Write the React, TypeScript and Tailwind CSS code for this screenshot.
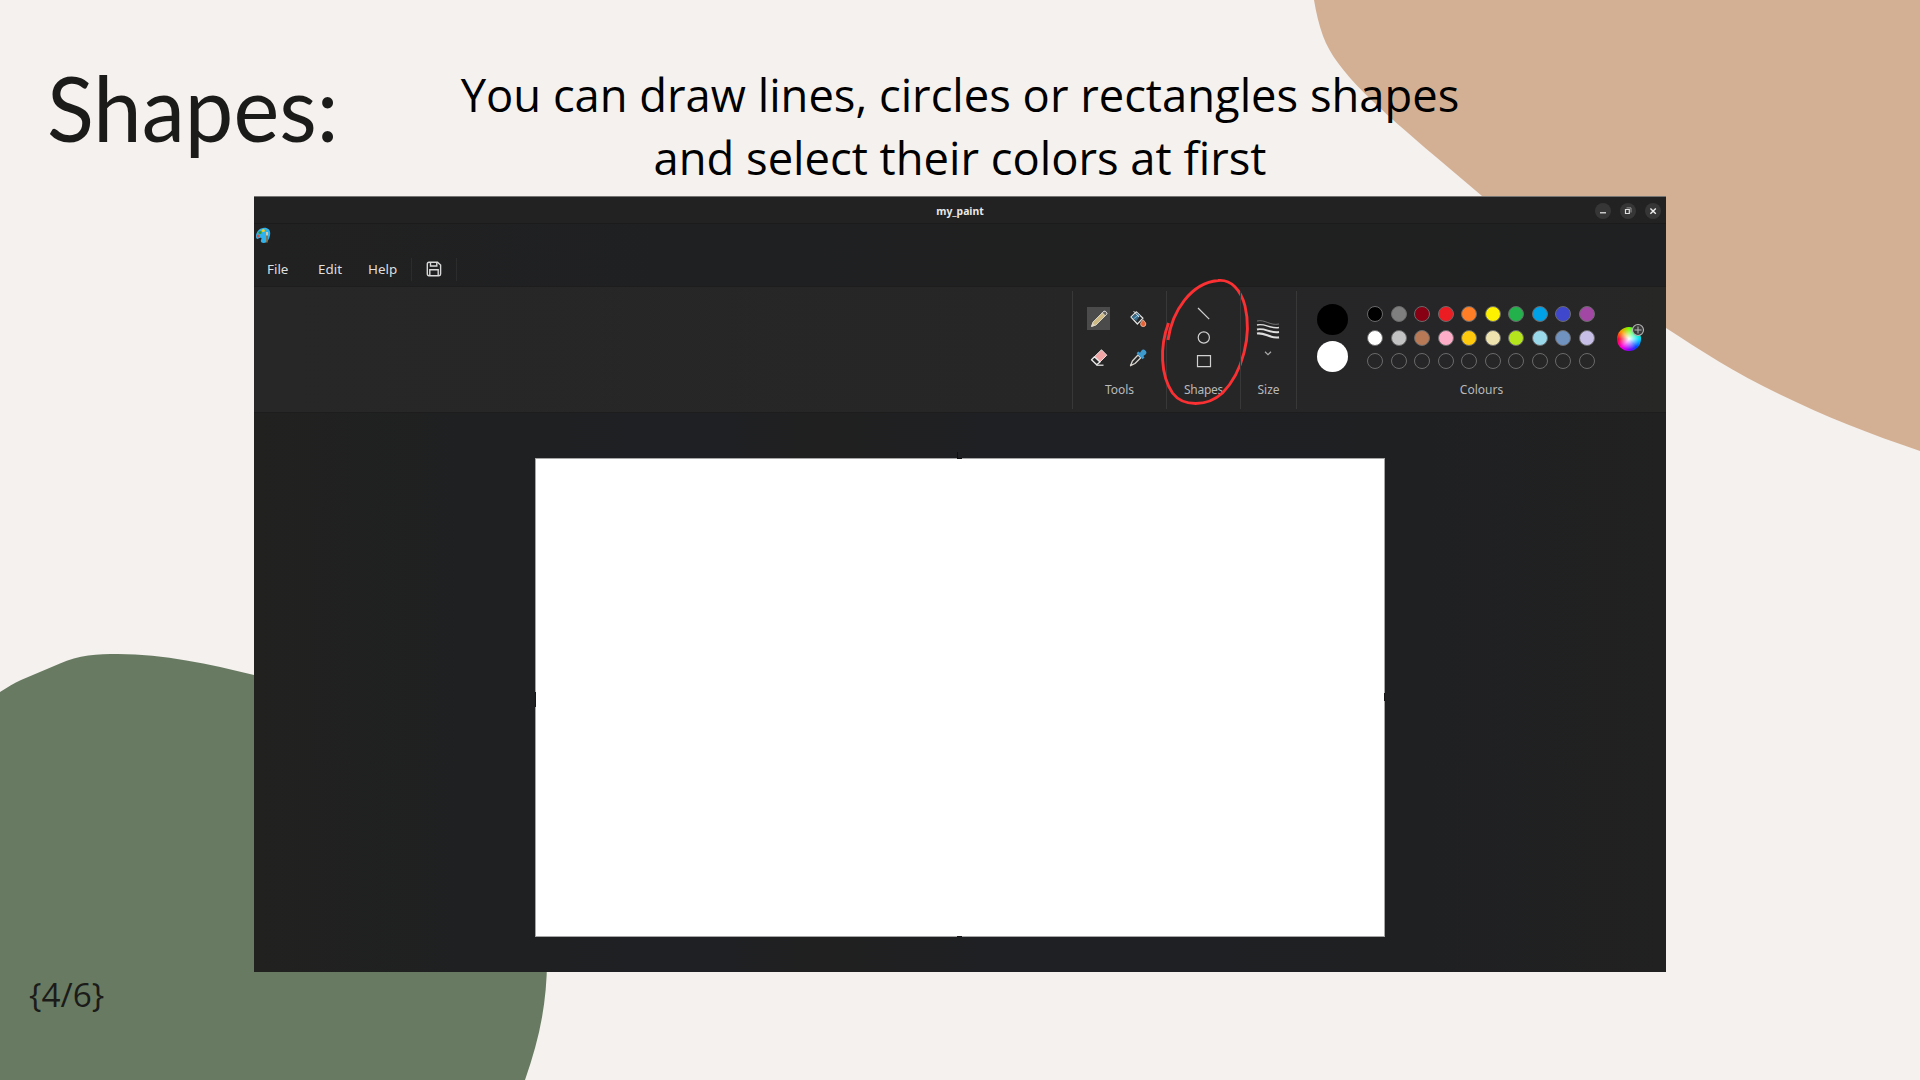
import type { ReactNode } from "react";

const SWATCHES: (string | null)[] = [
  "#000000", "#7f7f7f", "#870014", "#ec1c23", "#ff7e26", "#fef100", "#22b14b", "#00a1e7", "#3f47cc", "#a248a4",
  "#ffffff", "#c3c3c3", "#b87957", "#feadc8", "#ffc90d", "#eee3af", "#b5e51d", "#99d9ea", "#7092bf", "#c7bfe6",
  null, null, null, null, null, null, null, null, null, null,
];

function Backdrop() {
  return (
    <svg className="absolute inset-0" width="1920" height="1080" viewBox="0 0 1920 1080">
      <path
        fill="#d3b094"
        d="M1314 0C1316 12 1319 25 1323 36C1336 72 1380 109 1436 157L1482 196L1666 328C1700 350 1735 373 1779 394C1826 417 1870 434 1920 451V0Z"
      />
      <path
        fill="#687b62"
        d="M0 692C8 687 14 683 21 680L60 663.5C78 655 98 654 118 654C164 654 209 664 254 675L500 760L547 960C547 1004 539 1040 525 1080H0Z"
      />
    </svg>
  );
}

function PaletteLogo() {
  return (
    <svg width="16" height="17" viewBox="0 0 16 17">
      <path fill="#2fb3ee" d="M9 .8C13 .6 15.300 3 15.200 6.500C15.200 9 14 13 11.500 15.200C9 16.600 5.600 16 5.800 13.800C6 12 7.500 11 5.500 10.800C4 10.800 3.200 12.300 1.800 11.800C-.4 10 1.500 1.500 9 .8Z" />
      <circle cx="3.2" cy="9" r="1.6" fill="#d8503c" />
      <circle cx="5" cy="5.600" r="1.6" fill="#2f9a35" />
      <circle cx="8.300" cy="3.5" r="1.6" fill="#f4cb1c" />
      <path d="M12 6V15.5" stroke="#9b6224" strokeWidth="1.5" />
      <path d="M12 5V8.5" stroke="#d8c6a4" strokeWidth="2" />
    </svg>
  );
}

function SaveIcon() {
  return (
    <svg width="16" height="16" viewBox="0 0 16 16" fill="none" stroke="#d8d8d8" strokeWidth="1.4">
      <path d="M3 1.2H11.5L14.6 4V13Q14.6 14.7 13 14.7H3Q1.3 14.7 1.3 13V3Q1.3 1.2 3 1.2Z" />
      <path d="M4.5 1.5V5H10.8V1.5M3.8 14.5V8.8H12.2V14.5" />
    </svg>
  );
}

function PencilIcon() {
  return (
    <svg width="18" height="18" viewBox="0 0 18 18">
      <path d="M1.5 16.5L3 12L13 2Q14.5.8 16 2T16 5L6 15Z" fill="#cdb983" stroke="#d9d3c4" strokeWidth="1" />
      <path d="M12.2 2.8L14 1.2Q15.4 1 16.4 2.2T16.4 4.6L15.2 5.8Z" fill="#66615a" stroke="#dedede" strokeWidth=".9" />
      <path d="M1.2 16.8L2.6 12.8L5.2 15.4Z" fill="#ddd5c2" />
    </svg>
  );
}

function BucketIcon() {
  return (
    <svg width="18" height="18" viewBox="0 0 18 18">
      <path d="M2 7L7.2 1.8L14 8.2L8.4 14Z" fill="#27282a" stroke="#e2e2e2" strokeWidth="1.2" strokeLinejoin="round" />
      <path d="M2.6 7L8 2.7L11.2 5.8L7.3 11Z" fill="#386a87" />
      <path d="M4.4 9L10 4.7" stroke="#74b8df" strokeWidth="1" />
      <path d="M4.5 1L10 7" stroke="#dadada" strokeWidth="1" />
      <path d="M14.2 9.8C15.2 11.3 16.8 12.5 16.8 14A2.6 2.6 0 0 1 11.6 14C11.6 12.5 13.2 11.3 14.2 9.8Z" fill="#e36238" stroke="#f3c5a8" strokeWidth=".8" />
    </svg>
  );
}

function EraserIcon() {
  return (
    <svg width="18" height="18" viewBox="0 0 18 18">
      <path d="M4.600 7.500L11.5 .8L16.800 6.200L10 13Z" fill="#f1a5a5" stroke="#e7dddd" strokeWidth="1" strokeLinejoin="round" />
      <path d="M4.5 7.8L1.5 10.7L6.7 15.8L10 13Z" fill="#29292a" stroke="#ececec" strokeWidth="1.3" strokeLinejoin="round" />
      <path d="M6.5 16.2H13.5" stroke="#ececec" strokeWidth="1.2" />
    </svg>
  );
}

function DropperIcon() {
  return (
    <svg width="18" height="18" viewBox="0 0 18 18">
      <path d="M9 6L11.8 8.8L6 14.5L1.5 16.7L3.4 12Z" fill="#28292a" stroke="#d8d3cd" strokeWidth="1.3" strokeLinejoin="round" />
      <path d="M7.6 4.300L9.2 2.6L11 3.7L12.3 1.7A2.6 2.6 0 0 1 16.5 5.6L14.4 7L15.5 8.5L13.6 10.300Z" fill="#3d9bd0" />
    </svg>
  );
}

function Group({ label, className, children }: { label: string; className: string; children: ReactNode }) {
  return (
    <section className={`relative flex h-[118px] flex-col border-l border-[#383839] ${className}`}>
      <div className="h-[91px]">{children}</div>
      <div className="text-center text-[12px] leading-[16px] text-[#b9b9b9]">{label}</div>
    </section>
  );
}

function TitleBar() {
  return (
    <header className="grid h-[27px] grid-cols-[1fr_auto_1fr] items-center border-b border-[#1b1b1b] bg-[#222222]">
      <span />
      <span className="pt-[3px] text-[10.4px] leading-none font-bold text-[#e9e9e9]">my_paint</span>
      <div className="flex justify-end gap-[9px] pt-px pr-[5px]">
        <svg width="16" height="16" viewBox="0 0 16 16">
          <circle cx="8" cy="8" r="8" fill="#363636" />
          <path d="M5 9.8H11" stroke="#eeeeee" strokeWidth="1.2" />
        </svg>
        <svg width="16" height="16" viewBox="0 0 16 16" fill="none" stroke="#dedede">
          <circle cx="8" cy="8" r="8" fill="#363636" stroke="none" />
          <path d="M5.5 6.5H9.3V10.5H5.5Z" strokeWidth="1.2" />
          <path d="M6.5 4.9H11V9.5" stroke="#969696" />
        </svg>
        <svg width="16" height="16" viewBox="0 0 16 16">
          <circle cx="8" cy="8" r="8" fill="#363636" />
          <path d="M5.4 5.4L10.8 10.8M10.8 5.4L5.4 10.8" stroke="#eeeeee" strokeWidth="1.4" />
        </svg>
      </div>
    </header>
  );
}

function MenuBar() {
  return (
    <nav className="h-[62px] bg-[linear-gradient(90deg,#212121,#1f2022_30%,#202020_65%,#1f2021)]">
      <div className="h-[29px] pt-[3px] pl-[0.5px]"><PaletteLogo /></div>
      <div className="flex h-[32px] items-center text-[13.4px] text-[#dfdfdf]">
        <span className="ml-[13px] w-[51px]">File</span>
        <span className="w-[50px]">Edit</span>
        <span className="w-[43px]">Help</span>
        <span className="h-[23px] w-px bg-[#2c2c2c]" />
        <span className="mr-[14px] ml-[14px]"><SaveIcon /></span>
        <span className="h-[23px] w-px bg-[#2c2c2c]" />
      </div>
    </nav>
  );
}

function Ribbon() {
  return (
    <div className="flex h-[127px] justify-end border-y border-[#1d1d1e] bg-[linear-gradient(90deg,#272727,#262627_60%,#262628_85%,#272726)] pt-[4px]">
      <Group label="Tools" className="w-[94px]">
        <div className="grid grid-cols-[23px_23px] gap-x-[16px] gap-y-[16px] pt-[16px] pl-[14px]">
          <span className="grid size-[23px] place-items-center bg-[#4b4b4b]"><PencilIcon /></span>
          <span className="grid size-[23px] place-items-center"><BucketIcon /></span>
          <span className="grid size-[23px] place-items-center"><EraserIcon /></span>
          <span className="grid size-[23px] place-items-center"><DropperIcon /></span>
        </div>
      </Group>
      <Group label="Shapes" className="w-[74px] [&>div:last-child]:tracking-[-0.3px]">
        <svg className="mt-[14px] ml-[28px]" width="18" height="66" viewBox="0 0 18 66" fill="none" stroke="#d0d0d0" strokeWidth="1.2">
          <path d="M3 3L14.2 14.2" />
          <circle cx="8.8" cy="32.5" r="5.6" />
          <path d="M2.5 50.7H15.5V61.7H2.5Z" />
        </svg>
        <svg className="absolute -top-[14px] -left-[8px]" width="96" height="132" viewBox="0 0 96 132" fill="none">
          <path
            d="M9.5 46C.5 70 1.500 98 13.500 116C24 130 48 130 63.500 116C84 95 93 58 86 29C82 13 72 2 59 3.500C32 6 13 34 9 63"
            stroke="#fa3033"
            strokeWidth="2.9"
          />
        </svg>
      </Group>
      <Group label="Size" className="w-[56px]">
        <svg className="mt-[27px] ml-[15px]" width="26" height="42" viewBox="0 0 26 42" fill="none" stroke="#dedede">
          <path d="M1 3C9 1 14 8 23 6" strokeWidth=".8" stroke="#858585" />
          <path d="M1 7C9 5 14 11 23 9.500" strokeWidth="1.4" />
          <path d="M1 11.500C9 9.500 14 15.500 23 14" strokeWidth="1.9" />
          <path d="M1 15.500C9 14 14 21 23 19.300" strokeWidth="2.2" />
          <path d="M9 33.800L12 36.600L15 33.800" strokeWidth="1.2" stroke="#aaaaaa" />
        </svg>
      </Group>
      <Group label="Colours" className="w-[370px]">
        <div className="flex">
          <div className="flex w-[70px] flex-col items-center gap-[6px] pt-[12.5px]">
            <span className="size-[31px] rounded-full bg-black" />
            <span className="size-[31px] rounded-full bg-white" />
          </div>
          <div className="mt-[15px] grid h-[63px] w-[228px] grid-cols-10 content-between justify-between gap-x-[7.5px]">
            {SWATCHES.map((color, i) => (
              <span key={i} className="size-4 rounded-full border border-[#6a6a6b]" style={{ backgroundColor: color ?? "transparent" }} />
            ))}
          </div>
          <div className="relative mt-[36px] ml-[22px] size-[24px] rounded-full bg-[radial-gradient(circle,#fff,transparent_62%),conic-gradient(#7f0,#0f8_12%,#0df_25%,#04f_38%,#80f_50%,#f0d_62%,#f03_75%,#f90_87%,#7f0)]">
            <svg className="absolute -top-[4px] left-[14px]" width="14" height="14" viewBox="0 0 14 14">
              <circle cx="7" cy="7" r="5.5" fill="#3a3a3a" stroke="#b8b8b8" strokeWidth="1.1" />
              <path d="M7 3.500V10.500M3.500 7H10.500" stroke="#b8b8b8" />
            </svg>
          </div>
        </div>
      </Group>
    </div>
  );
}

function PaintWindow() {
  return (
    <main className="relative ml-[254px] flex h-[776px] w-[1412px] flex-col border-t border-[#777573] bg-[#202020] font-['Noto_Sans',sans-serif]">
      <TitleBar />
      <MenuBar />
      <Ribbon />
      <div className="flex-1 bg-[linear-gradient(90deg,#212120,#1f2021_15%,#1f2024_32%,#202020_40%,#1f2024_55%,#1f2022_82%,#212121)] pt-[45px]">
        <div className="relative ml-[281px] h-[479px] w-[850px] border border-[#a6a6a6] bg-white">
          <i className="absolute -top-[7px] left-[421px] h-[7px] w-px bg-[#101011]" />
          <i className="absolute -top-px left-[421px] h-px w-[5px] bg-[#111111]" />
          <i className="absolute top-[233px] -left-px h-[15px] w-px bg-[#161616]" />
          <i className="absolute top-[234px] -right-px h-[8px] w-px bg-[#161616]" />
          <i className="absolute -bottom-px left-[421px] h-px w-[5px] bg-[#161616]" />
        </div>
      </div>
    </main>
  );
}

export default function App() {
  return (
    <div className="relative h-[1080px] w-[1920px] overflow-hidden bg-[#f5f1ee] font-['Open_Sans',sans-serif]">
      <Backdrop />
      <div className="relative flex h-[196px]">
        <h1 className="ml-[47px] w-[365px] origin-left scale-x-[0.953] pt-[52px] font-['Lato',sans-serif] text-[91px] leading-[109px] whitespace-nowrap text-[#1b1b1a]">Shapes:</h1>
        <p className="w-[1096px] pt-[63px] text-center text-[45.33px] leading-[63px] text-black">
          You can draw lines, circles or rectangles shapes
          <br />
          and select their colors at first
        </p>
      </div>
      <PaintWindow />
      <footer className="relative pl-[29px] text-[33.3px] leading-[45px] text-[#1b1b1a]">{"{4/6}"}</footer>
    </div>
  );
}
